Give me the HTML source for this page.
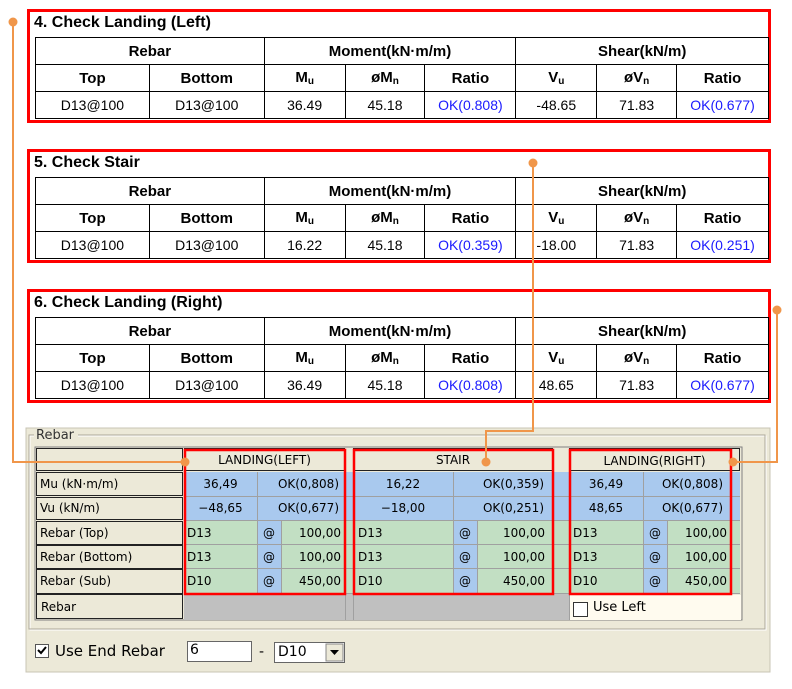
<!DOCTYPE html><html><head><meta charset="utf-8"><style>
*{margin:0;padding:0;box-sizing:border-box}
body{width:792px;height:689px;background:#fff;position:relative;overflow:hidden;font-family:"Liberation Sans","Noto Sans CJK KR",sans-serif}
.box{position:absolute;left:27px;width:744px;height:114px;border:3px solid #f00}
.ttl{position:absolute;left:4px;top:2px;font-weight:bold;font-size:16px;color:#000}
table.t{position:absolute;left:5px;top:25px;border-collapse:collapse;width:734px;font-size:14px}
table.t td{border:1px solid #000;text-align:center;height:27px;padding:0}
table.t tr.h td{font-weight:bold;font-size:15px}
.b{color:#1a1aff}
sub{font-size:10px;vertical-align:-2px}
.a{position:absolute;font-family:"DejaVu Sans",sans-serif;font-size:12px;color:#000;line-height:23px;white-space:nowrap}
</style></head><body>
<div class="box" style="top:9px"><div class="ttl">4. Check Landing (Left)</div>
<table class="t"><colgroup><col style="width:114px"><col style="width:115px"><col style="width:81px"><col style="width:80px"><col style="width:91px"><col style="width:81px"><col style="width:80px"><col style="width:92px"></colgroup>
<tr class="h"><td colspan="2">Rebar</td><td colspan="3">Moment(kN·m/m)</td><td colspan="3">Shear(kN/m)</td></tr>
<tr class="h"><td>Top</td><td>Bottom</td><td>M<sub>u</sub></td><td>øM<sub>n</sub></td><td>Ratio</td><td>V<sub>u</sub></td><td>øV<sub>n</sub></td><td>Ratio</td></tr>
<tr><td>D13@100</td><td>D13@100</td><td>36.49</td><td>45.18</td><td class="b">OK(0.808)</td><td>-48.65</td><td>71.83</td><td class="b">OK(0.677)</td></tr></table></div>
<div class="box" style="top:149px"><div class="ttl">5. Check Stair</div>
<table class="t"><colgroup><col style="width:114px"><col style="width:115px"><col style="width:81px"><col style="width:80px"><col style="width:91px"><col style="width:81px"><col style="width:80px"><col style="width:92px"></colgroup>
<tr class="h"><td colspan="2">Rebar</td><td colspan="3">Moment(kN·m/m)</td><td colspan="3">Shear(kN/m)</td></tr>
<tr class="h"><td>Top</td><td>Bottom</td><td>M<sub>u</sub></td><td>øM<sub>n</sub></td><td>Ratio</td><td>V<sub>u</sub></td><td>øV<sub>n</sub></td><td>Ratio</td></tr>
<tr><td>D13@100</td><td>D13@100</td><td>16.22</td><td>45.18</td><td class="b">OK(0.359)</td><td>-18.00</td><td>71.83</td><td class="b">OK(0.251)</td></tr></table></div>
<div class="box" style="top:289px"><div class="ttl">6. Check Landing (Right)</div>
<table class="t"><colgroup><col style="width:114px"><col style="width:115px"><col style="width:81px"><col style="width:80px"><col style="width:91px"><col style="width:81px"><col style="width:80px"><col style="width:92px"></colgroup>
<tr class="h"><td colspan="2">Rebar</td><td colspan="3">Moment(kN·m/m)</td><td colspan="3">Shear(kN/m)</td></tr>
<tr class="h"><td>Top</td><td>Bottom</td><td>M<sub>u</sub></td><td>øM<sub>n</sub></td><td>Ratio</td><td>V<sub>u</sub></td><td>øV<sub>n</sub></td><td>Ratio</td></tr>
<tr><td>D13@100</td><td>D13@100</td><td>36.49</td><td>45.18</td><td class="b">OK(0.808)</td><td>48.65</td><td>71.83</td><td class="b">OK(0.677)</td></tr></table></div>

<svg style="position:absolute;left:0;top:0" width="792" height="689">
<rect x="26" y="428" width="744" height="244" fill="#ece9d8" stroke="#c8c5b5"/>
<rect x="30" y="436" width="736" height="194" fill="none" stroke="#fff"/>
<rect x="29" y="435" width="736" height="194" fill="none" stroke="#aca899"/>
<rect x="34" y="431" width="44" height="12" fill="#ece9d8"/>
<rect x="35" y="447" width="707" height="173" fill="#ece9d8" stroke="#808080"/>
<!-- label buttons -->
<g fill="#ece9d8" stroke="#222">
<rect x="36.5" y="448.5" width="146" height="22"/><rect x="36.5" y="472.5" width="146" height="23"/><rect x="36.5" y="497.5" width="146" height="22"/><rect x="36.5" y="521.5" width="146" height="23"/><rect x="36.5" y="545.5" width="146" height="23"/><rect x="36.5" y="569.5" width="146" height="24"/><rect x="36.5" y="594.5" width="146" height="24"/>
<rect x="184.5" y="448.5" width="160" height="22"/><rect x="353.5" y="448.5" width="199" height="22"/><rect x="569.5" y="448.5" width="170" height="22"/>
</g>
<g fill="#a9c9ee"><rect x="184" y="472" width="556" height="48"/></g>
<g fill="#c2dfc3"><rect x="184" y="521" width="556" height="73"/></g>
<g fill="#a9c9ee"><rect x="257" y="521" width="24" height="73"/><rect x="453" y="521" width="24" height="73"/><rect x="643" y="521" width="24" height="73"/></g>
<rect x="184" y="594" width="385" height="26" fill="#c0c0c0"/>
<rect x="569" y="595" width="172" height="25" fill="#fffbef"/>
<g stroke="#a0a0a0" stroke-width="1">
<line x1="184" y1="496.5" x2="740" y2="496.5"/><line x1="184" y1="520.5" x2="740" y2="520.5"/><line x1="184" y1="544.5" x2="740" y2="544.5"/><line x1="184" y1="568.5" x2="740" y2="568.5"/><line x1="184" y1="593.5" x2="740" y2="593.5"/>
<line x1="257.5" y1="472" x2="257.5" y2="594"/><line x1="281.5" y1="521" x2="281.5" y2="594"/>
<line x1="453.5" y1="472" x2="453.5" y2="594"/><line x1="477.5" y1="521" x2="477.5" y2="594"/>
<line x1="643.5" y1="472" x2="643.5" y2="594"/><line x1="667.5" y1="521" x2="667.5" y2="594"/>
<line x1="345.5" y1="472" x2="345.5" y2="620"/><line x1="353.5" y1="472" x2="353.5" y2="620"/><line x1="553.5" y1="472" x2="553.5" y2="594"/><line x1="569.5" y1="472" x2="569.5" y2="620"/>
</g>
<rect x="573.5" y="602.5" width="14" height="14" fill="#fff" stroke="#333"/>
<!-- checkbox -->
<rect x="35.5" y="644.5" width="13" height="13" fill="#fff" stroke="#555"/>
<path d="M38 650 l3 3 l5 -6" stroke="#000" stroke-width="2" fill="none"/>
<rect x="187.5" y="641.5" width="64" height="20" fill="#fff" stroke="#666"/>
<rect x="274.5" y="642.5" width="70" height="20" fill="#fff" stroke="#666"/>
<rect x="326" y="644" width="17" height="17" fill="#ece9d8" stroke="#888"/>
<path d="M330 650 h9 l-4.5 5z" fill="#000"/>
<!-- red boxes -->
<g fill="none" stroke="#f00" stroke-width="2.5">
<rect x="185" y="450" width="160" height="144"/><rect x="354" y="450" width="199" height="144"/><rect x="570" y="450" width="161" height="144"/></g>
<!-- orange connectors -->
<g stroke="#f0964a" stroke-width="2" fill="none">
<path d="M13 22 V462 H185"/><path d="M533 163 V431 H486 V462"/><path d="M733 462 H777 V310"/></g>
<g fill="#f0964a"><circle cx="13" cy="22" r="4.5"/><circle cx="185" cy="462" r="4.5"/><circle cx="533" cy="163" r="4.5"/><circle cx="486" cy="462" r="4.5"/><circle cx="733" cy="462" r="4.5"/><circle cx="777" cy="310" r="4.5"/></g>
</svg>
<div class="a" style="left:36px;top:428px;font-size:13px;line-height:16px;color:#333">Rebar</div>
<div class="a" style="left:40px;top:473px">Mu (kN·m/m)</div>
<div class="a" style="left:40px;top:497px">Vu (kN/m)</div>
<div class="a" style="left:40px;top:522px">Rebar (Top)</div>
<div class="a" style="left:40px;top:546px">Rebar (Bottom)</div>
<div class="a" style="left:40px;top:570px">Rebar (Sub)</div>
<div class="a" style="left:41px;top:596px">Rebar</div>
<div class="a" style="left:184px;width:161px;text-align:center;top:449px">LANDING(LEFT)</div>
<div class="a" style="left:353px;width:200px;text-align:center;top:449px">STAIR</div>
<div class="a" style="left:569px;width:171px;text-align:center;top:450px">LANDING(RIGHT)</div>
<div class="a" style="left:184px;width:73px;text-align:center;top:473px">36,49</div>
<div class="a b" style="left:257px;width:82px;text-align:right;top:473px">OK(0,808)</div>
<div class="a" style="left:184px;width:73px;text-align:center;top:497px">−48,65</div>
<div class="a b" style="left:257px;width:82px;text-align:right;top:497px">OK(0,677)</div>
<div class="a" style="left:353px;width:100px;text-align:center;top:473px">16,22</div>
<div class="a b" style="left:453px;width:91px;text-align:right;top:473px">OK(0,359)</div>
<div class="a" style="left:353px;width:100px;text-align:center;top:497px">−18,00</div>
<div class="a b" style="left:453px;width:91px;text-align:right;top:497px">OK(0,251)</div>
<div class="a" style="left:569px;width:74px;text-align:center;top:473px">36,49</div>
<div class="a b" style="left:643px;width:80px;text-align:right;top:473px">OK(0,808)</div>
<div class="a" style="left:569px;width:74px;text-align:center;top:497px">48,65</div>
<div class="a b" style="left:643px;width:80px;text-align:right;top:497px">OK(0,677)</div>
<div class="a" style="left:187px;top:522px">D13</div><div class="a" style="left:263px;top:522px">@</div><div class="a" style="left:281px;width:60px;text-align:right;top:522px">100,00</div>
<div class="a" style="left:187px;top:546px">D13</div><div class="a" style="left:263px;top:546px">@</div><div class="a" style="left:281px;width:60px;text-align:right;top:546px">100,00</div>
<div class="a" style="left:187px;top:570px">D10</div><div class="a" style="left:263px;top:570px">@</div><div class="a" style="left:281px;width:60px;text-align:right;top:570px">450,00</div>
<div class="a" style="left:358px;top:522px">D13</div><div class="a" style="left:459px;top:522px">@</div><div class="a" style="left:477px;width:68px;text-align:right;top:522px">100,00</div>
<div class="a" style="left:358px;top:546px">D13</div><div class="a" style="left:459px;top:546px">@</div><div class="a" style="left:477px;width:68px;text-align:right;top:546px">100,00</div>
<div class="a" style="left:358px;top:570px">D10</div><div class="a" style="left:459px;top:570px">@</div><div class="a" style="left:477px;width:68px;text-align:right;top:570px">450,00</div>
<div class="a" style="left:573px;top:522px">D13</div><div class="a" style="left:649px;top:522px">@</div><div class="a" style="left:667px;width:60px;text-align:right;top:522px">100,00</div>
<div class="a" style="left:573px;top:546px">D13</div><div class="a" style="left:649px;top:546px">@</div><div class="a" style="left:667px;width:60px;text-align:right;top:546px">100,00</div>
<div class="a" style="left:573px;top:570px">D10</div><div class="a" style="left:649px;top:570px">@</div><div class="a" style="left:667px;width:60px;text-align:right;top:570px">450,00</div>
<div class="a" style="left:593px;top:596px;font-size:13px">Use Left</div>
<div class="a" style="left:55px;top:640px;font-size:15px">Use End Rebar</div>
<div class="a" style="left:190px;top:639px;font-size:14px">6</div>
<div class="a" style="left:259px;top:641px;font-size:14px">-</div>
<div class="a" style="left:278px;top:641px;font-size:14px">D10</div>
</body></html>
